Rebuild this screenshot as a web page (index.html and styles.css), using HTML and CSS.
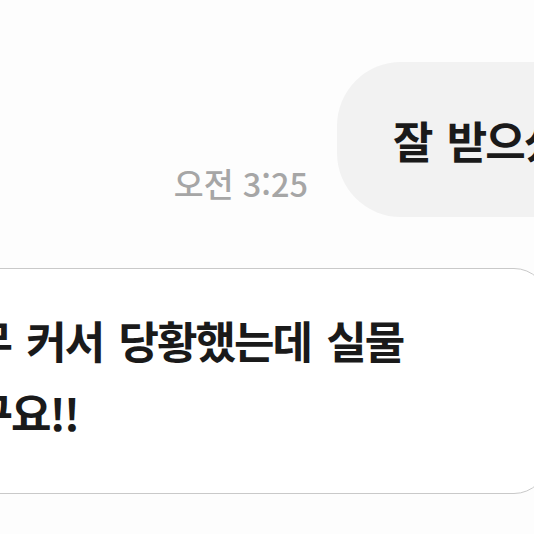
FILE: index.html
```html
<!DOCTYPE html>
<html lang="ko">
<head>
<meta charset="utf-8">
<link rel="stylesheet" href="styles.css">
</head>
<body>
<div class="chat">
  <div class="row sent">
    <span class="time">오전 3:25</span>
    <div class="bubble sent-bubble">잘 받으셨나요?</div>
  </div>
  <div class="row recv">
    <div class="bubble recv-bubble">너무 커서 당황했는데 실물<br>좋구요!!</div>
  </div>
</div>
</body>
</html>
```
FILE: styles.css
```css
html, body {
  margin: 0;
  padding: 0;
  width: 534px;
  height: 534px;
  overflow: hidden;
  background: #fdfdfd;
}
.chat {
  padding-top: 62px;
  font-family: "Noto Sans CJK KR", "Noto Sans", sans-serif;
}
.sent {
  display: grid;
  grid-template-columns: 337px 320px;
  align-items: end;
}
.time {
  justify-self: end;
  margin-right: 29px;
  margin-bottom: 18px;
  font-size: 32.5px;
  line-height: 1;
  font-weight: 500;
  color: #a6a6a6;
}
.bubble {
  box-sizing: border-box;
  font-size: 44px;
  font-weight: 700;
  letter-spacing: -2px;
  word-spacing: 5px;
  color: #1a1a1a;
  white-space: nowrap;
}
.sent-bubble {
  height: 155px;
  display: flex;
  align-items: center;
  padding-left: 56px;
  background: #f2f2f2;
  border-radius: 64px 0 0 64px;
}
.recv {
  margin-top: 51px;
  margin-left: -100px;
}
.recv-bubble {
  width: 648px;
  padding: 35px 0 45px 33px;
  line-height: 72px;
  background: #ffffff;
  border: 1.5px solid #c9c9c9;
  border-radius: 34px;
}
```
